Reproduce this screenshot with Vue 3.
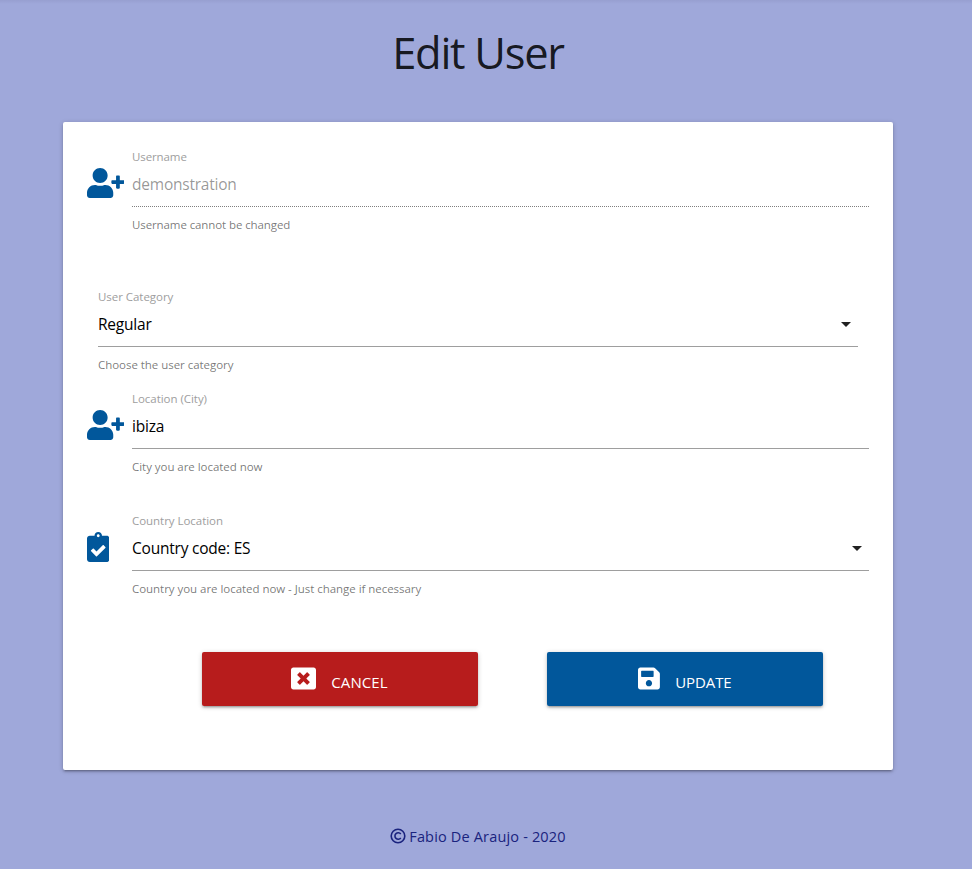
<script setup>
const userPlus = 'M624 208h-64v-64c0-8.8-7.2-16-16-16h-32c-8.8 0-16 7.2-16 16v64h-64c-8.8 0-16 7.2-16 16v32c0 8.8 7.2 16 16 16h64v64c0 8.8 7.2 16 16 16h32c8.8 0 16-7.2 16-16v-64h64c8.8 0 16-7.2 16-16v-32c0-8.8-7.2-16-16-16zm-400 48c70.7 0 128-57.3 128-128S294.7 0 224 0 96 57.3 96 128s57.3 128 128 128zm89.6 32h-16.7c-22.2 10.2-46.9 16-72.9 16s-50.6-5.8-72.9-16h-16.7C60.2 288 0 348.2 0 422.4V464c0 26.5 21.5 48 48 48h352c26.5 0 48-21.5 48-48v-41.6c0-74.2-60.2-134.4-134.4-134.4z'
const clipboardCheck = 'M336 64h-80c0-35.3-28.7-64-64-64s-64 28.7-64 64H48C21.5 64 0 85.5 0 112v352c0 26.5 21.5 48 48 48h288c26.5 0 48-21.5 48-48V112c0-26.5-21.5-48-48-48zM192 40c13.3 0 24 10.7 24 24s-10.7 24-24 24-24-10.7-24-24 10.7-24 24-24zm121.2 231.8l-143 141.8c-4.7 4.7-12.3 4.6-17-.1l-82.6-83.3c-4.7-4.7-4.6-12.3.1-17L99.1 285c4.7-4.7 12.3-4.6 17 .1l46 46.4 106-105.2c4.7-4.7 12.3-4.6 17 .1l28.2 28.4c4.7 4.8 4.6 12.3-.1 17z'

const fields = [
  { id: 'username', label: 'Username', value: 'demonstration', help: 'Username cannot be changed', icon: userPlus, box: '0 0 640 512', disabled: true },
  { id: 'category', label: 'User Category', value: 'Regular', help: 'Choose the user category', select: true },
  { id: 'city', label: 'Location (City)', value: 'ibiza', help: 'City you are located now', icon: userPlus, box: '0 0 640 512' },
  { id: 'country', label: 'Country Location', value: 'Country code: ES', help: 'Country you are located now - Just change if necessary', icon: clipboardCheck, box: '0 0 384 512', select: true },
]
</script>

<template>
  <div class="page">
    <h1><span>Edit User</span></h1>
    <main class="card">
      <div v-for="f in fields" :key="f.id" class="row" :class="[f.id, { disabled: f.disabled }]">
        <div v-if="f.icon" class="prefix">
          <svg :viewBox="f.box"><path :d="f.icon" /></svg>
        </div>
        <div class="field">
          <div class="label"><span>{{ f.label }}</span></div>
          <div class="value">
            <span>{{ f.value }}</span>
            <svg v-if="f.select" class="caret" viewBox="0 0 24 24"><path d="M7 10l5 5 5-5z" /></svg>
          </div>
          <div class="help"><span>{{ f.help }}</span></div>
        </div>
      </div>
      <div class="actions">
        <button class="btn cancel" type="button">
          <svg viewBox="0 0 512 512"><path d="M464 32H48C21.5 32 0 53.5 0 80v352c0 26.5 21.5 48 48 48h416c26.5 0 48-21.5 48-48V80c0-26.5-21.5-48-48-48zm-83.6 290.5c4.8 4.8 4.8 12.6 0 17.4l-40.5 40.5c-4.8 4.8-12.6 4.8-17.4 0L256 313.3l-66.5 67.1c-4.8 4.8-12.6 4.8-17.4 0l-40.5-40.5c-4.8-4.8-4.8-12.6 0-17.4l67.1-66.5-67.1-66.5c-4.8-4.8-4.8-12.6 0-17.4l40.5-40.5c4.8-4.8 12.6-4.8 17.4 0l66.5 67.1 66.5-67.1c4.8-4.8 12.6-4.8 17.4 0l40.5 40.5c4.8 4.8 4.8 12.6 0 17.4L313.3 256l67.1 66.5z" /></svg>
          <span>CANCEL</span>
        </button>
        <button class="btn update" type="button">
          <svg viewBox="0 0 448 512"><path d="M433.941 129.941l-83.882-83.882A48 48 0 0 0 316.118 32H48C21.49 32 0 53.49 0 80v352c0 26.51 21.49 48 48 48h352c26.51 0 48-21.49 48-48V163.882a48 48 0 0 0-14.059-33.941zM224 416c-35.346 0-64-28.654-64-64 0-35.346 28.654-64 64-64s64 28.654 64 64c0 35.346-28.654 64-64 64zm96-304.52V212c0 6.627-5.373 12-12 12H76c-6.627 0-12-5.373-12-12V108c0-6.627 5.373-12 12-12h228.52c3.183 0 6.235 1.264 8.485 3.515l3.48 3.48A11.996 11.996 0 0 1 320 111.48z" /></svg>
          <span>UPDATE</span>
        </button>
      </div>
    </main>
    <footer>
      <svg viewBox="0 0 16 16"><circle cx="8" cy="8" r="6.8" /><path d="M10.8 10.1A3.3 3.3 0 1 1 10.8 5.9" /></svg>
      <span>Fabio De Araujo - 2020</span>
    </footer>
  </div>
</template>

<style>
body {
  margin: 0;
  background: linear-gradient(#979fd0, #9fa8da 4px) no-repeat #9fa8da;
}
</style>

<style scoped>
.page {
  box-sizing: border-box;
  width: 956px;
  height: 869px;
  padding: 22px 63px 0;
  font-family: "Open Sans", "Noto Sans", sans-serif;
  color: rgba(0, 0, 0, 0.87);
}
h1 {
  margin: 0 0 40px;
  height: 60px;
  line-height: 61px;
  font-size: 43.5px;
  font-weight: 400;
  text-align: center;
  letter-spacing: -1.3px;
}
.card {
  box-sizing: border-box;
  height: 648px;
  padding: 27px 24px 0 23px;
  background: #fff;
  border-radius: 2px;
  box-shadow: 0 2px 2px 0 rgba(0, 0, 0, 0.14), 0 3px 1px -2px rgba(0, 0, 0, 0.12), 0 1px 5px 0 rgba(0, 0, 0, 0.2);
}
.row {
  display: flex;
  height: 84px;
}
.category {
  margin: 56px 11px 18px 12px;
}
.country {
  margin-top: 38px;
}
.prefix {
  width: 46px;
  padding-top: 19px;
  flex: none;
}
.prefix svg {
  display: block;
  height: 30px;
  margin-left: 0.5px;
  fill: #01579b;
}
.field {
  flex: 1;
}
.label,
.help {
  height: 16px;
  line-height: 16px;
  font-size: 11.5px;
  letter-spacing: -0.04px;
  white-space: nowrap;
}
.label {
  color: #9e9e9e;
}
.help {
  margin-top: 10px;
  color: rgba(0, 0, 0, 0.54);
}
.username .label,
.username .help {
  letter-spacing: -0.1px;
}
.value {
  box-sizing: border-box;
  display: flex;
  align-items: center;
  justify-content: space-between;
  height: 42px;
  padding-bottom: 4px;
  border-bottom: 1px solid #9e9e9e;
  font-size: 15.5px;
  letter-spacing: -0.22px;
  line-height: 22px;
  color: #000;
}
.disabled .value {
  color: rgba(0, 0, 0, 0.42);
  border-bottom: 1px dotted rgba(0, 0, 0, 0.5);
}
.caret {
  width: 24px;
  height: 24px;
  fill: #212121;
}
.actions {
  display: flex;
  gap: 69px;
  margin: 55px 0 0 116px;
}
.btn {
  display: flex;
  justify-content: center;
  width: 276px;
  height: 54px;
  padding: 0;
  border: 0;
  border-radius: 2px;
  color: #fff;
  font: 15px/22px "Open Sans", "Noto Sans", sans-serif;
  box-shadow: 0 2px 2px 0 rgba(0, 0, 0, 0.14), 0 3px 1px -2px rgba(0, 0, 0, 0.12), 0 1px 5px 0 rgba(0, 0, 0, 0.2);
}
.btn svg {
  height: 25px;
  margin: 14px 15px 0 0;
  fill: #fff;
}
.btn span {
  margin-top: 19px;
}
.cancel {
  padding-right: 1px;
  letter-spacing: 0.1px;
  background: #b71c1c;
}
.update {
  letter-spacing: -0.1px;
  background: #01579b;
}
footer {
  display: flex;
  justify-content: center;
  align-items: center;
  gap: 3px;
  margin-top: 55px;
  height: 22px;
  font-size: 14.5px;
  font-weight: 500;
  letter-spacing: 0.17px;
  color: #1a237e;
}
footer svg {
  width: 16px;
  height: 16px;
  fill: none;
  stroke: #1a237e;
  stroke-width: 1.6;
}
</style>
